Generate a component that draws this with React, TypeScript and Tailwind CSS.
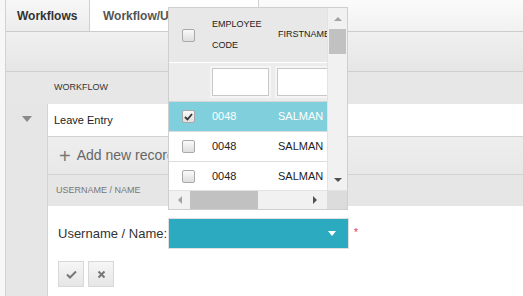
const rows = [
  { id: 1, code: "0048", name: "SALMAN", selected: true },
  { id: 2, code: "0048", name: "SALMAN", selected: false },
  { id: 3, code: "0048", name: "SALMAN", selected: false },
];

function Box({ checked }: { checked?: boolean }) {
  return (
    <div className="w-[13px] h-[13px] rounded-[2px] border border-[#a9a9a9] bg-gradient-to-b from-[#fafafa] to-[#dedede] flex items-center justify-center">
      {checked && (
        <svg width="9" height="8" viewBox="0 0 9 8">
          <path d="M1 4 L3.5 6.5 L8 1" stroke="#333" strokeWidth="1.8" fill="none" />
        </svg>
      )}
    </div>
  );
}

function EmployeePopup() {
  return (
    <div className="absolute left-[168px] top-[7px] w-[180px] h-[203px] border border-[#cfcfcf] bg-white flex flex-col">
      <div className="flex flex-1 min-h-0">
        <div className="flex-1 min-w-0 overflow-hidden">
          <div className="w-[200px]">
            {/* header */}
            <div className="h-[55px] bg-[#e8e8e8] flex items-center border-b border-[#fff] text-[9px] text-[#222]">
              <div className="w-[36px] flex justify-center pl-[2px]">
                <Box />
              </div>
              <div className="w-[66px] pl-[7px] leading-[21px]">
                EMPLOYEE
                <br />
                CODE
              </div>
              <div className="pl-[7px] whitespace-nowrap">FIRSTNAME</div>
            </div>
            {/* filter row */}
            <div className="h-[39px] bg-[#ececec] flex items-center border-b border-[#d6d6d6]">
              <div className="w-[36px]" />
              <div className="w-[66px] pl-[7px]">
                <div className="w-[57px] h-[28px] bg-white border border-[#c8c8c8] outline outline-2 outline-[#f5f5f5]" />
              </div>
              <div className="pl-[6px]">
                <div className="w-[60px] h-[28px] bg-white border border-[#c8c8c8] outline outline-2 outline-[#f5f5f5]" />
              </div>
            </div>
            {rows.map((r) => (
              <div
                key={r.id}
                className={`h-[30px] flex items-center text-[11px] border-b border-[#dcdcdc] ${
                  r.selected ? "bg-[#7fcfdc] text-white" : "bg-white text-[#222]"
                }`}
              >
                <div className="w-[36px] flex justify-center pl-[2px]">
                  <Box checked={r.selected} />
                </div>
                <div className="w-[66px] pl-[7px]">{r.code}</div>
                <div className="pl-[7px]">{r.name}</div>
              </div>
            ))}
          </div>
        </div>
        {/* vertical scrollbar */}
        <div className="w-[20px] bg-[#f1f1f1] border-l border-[#e3e3e3] flex flex-col items-center">
          <div className="h-[21px] flex items-center justify-center">
            <div className="w-0 h-0 border-l-[4px] border-r-[4px] border-b-[4px] border-l-transparent border-r-transparent border-b-[#a3a3a3]" />
          </div>
          <div className="w-[17px] h-[25px] bg-[#c1c1c1]" />
          <div className="flex-1" />
          <div className="h-[20px] flex items-center justify-center">
            <div className="w-0 h-0 border-l-[4px] border-r-[4px] border-t-[4px] border-l-transparent border-r-transparent border-t-[#505050]" />
          </div>
        </div>
      </div>
      {/* horizontal scrollbar */}
      <div className="h-[19px] flex bg-[#f1f1f1] border-t border-[#e3e3e3]">
        <div className="w-[21px] flex items-center justify-center">
          <div className="w-0 h-0 border-t-[4px] border-b-[4px] border-r-[4px] border-t-transparent border-b-transparent border-r-[#a3a3a3]" />
        </div>
        <div className="w-[68px] bg-[#c1c1c1]" />
        <div className="flex-1 flex items-center justify-end pr-[10px]">
          <div className="w-0 h-0 border-t-[4px] border-b-[4px] border-l-[4px] border-t-transparent border-b-transparent border-l-[#505050]" />
        </div>
        <div className="w-[20px] bg-[#dcdcdc]" />
      </div>
    </div>
  );
}

export default function App() {
  return (
    <div className="relative w-[523px] h-[296px] overflow-hidden bg-[#f7f7f7] pl-[5px] font-['Liberation_Sans',Arial,sans-serif]">
      <div className="h-full border-l border-[#d2d2d2] bg-white flex flex-col">
        {/* tabs */}
        <div className="h-[32px] flex bg-gradient-to-b from-[#fbfbfb] to-[#f1f1f1] border-b border-[#cccccc]">
          <div className="w-[84px] bg-gradient-to-b from-[#f7f7f7] to-[#ececec] border-r border-[#d0d0d0] flex items-center pl-[11px] text-[12px] font-bold text-[#333]">
            Workflows
          </div>
          <div className="w-[169px] bg-white border-r border-[#d0d0d0] flex items-center pl-[13px] text-[12px] font-bold text-[#555] whitespace-nowrap overflow-hidden">
            Workflow/User
          </div>
        </div>
        {/* grid toolbar */}
        <div className="h-[40px] bg-gradient-to-b from-[#f0f0f0] to-[#e6e6e6] border-b border-[#cfcfcf]" />
        {/* header */}
        <div className="h-[32px] bg-[#e7e7e7] flex items-center pl-[48px] text-[9px] text-[#333]">
          WORKFLOW
        </div>
        {/* master row */}
        <div className="flex flex-1 min-h-0">
          <div className="w-[42px] bg-[#e6e6e6] border-r border-[#d4d4d4] flex justify-center pt-[12px]">
            <div className="w-0 h-0 border-l-[5px] border-r-[5px] border-t-[6px] border-l-transparent border-r-transparent border-t-[#8a8a8a]" />
          </div>
          <div className="flex-1 flex flex-col">
            <div className="h-[32px] flex items-center pl-[6px] text-[11px] text-[#222] bg-white">
              Leave Entry
            </div>
            {/* detail grid */}
            <div className="h-[39px] bg-gradient-to-b from-[#eeeeee] to-[#e8e8e8] border-y border-[#d2d2d2] flex items-center pl-[11px] text-[14px] text-[#666]">
              <span className="text-[20px] leading-none font-light mr-[6px] text-[#777]">+</span>
              Add new record
            </div>
            <div className="h-[31px] bg-[#e6e6e6] flex items-center pl-[8px] text-[9px] text-[#777]">
              USERNAME / NAME
            </div>
            <div className="flex-1 bg-white pl-[10px] pt-[12px]">
              <div className="flex items-center">
                <span className="text-[13px] text-[#333] w-[110px] whitespace-nowrap">Username / Name:</span>
                <div className="w-[181px] h-[31px] bg-[#2caac0] border border-[#e0e0e0] flex items-center justify-end pr-[12px]">
                  <div className="w-0 h-0 border-l-[4px] border-r-[4px] border-t-[5px] border-l-transparent border-r-transparent border-t-white" />
                </div>
                <span className="ml-[5px] text-[10px] text-[#e8334a] -mt-[2px]">*</span>
              </div>
              <div className="flex gap-[4px] mt-[12px]">
                <div className="w-[26px] h-[26px] bg-gradient-to-b from-[#f6f6f6] to-[#e6e6e6] border border-[#d8d8d8] flex items-center justify-center">
                  <svg width="11" height="9" viewBox="0 0 11 9">
                    <path d="M1 4.5 L4 7.5 L10 1.5" stroke="#777" strokeWidth="2" fill="none" />
                  </svg>
                </div>
                <div className="w-[26px] h-[26px] bg-gradient-to-b from-[#f6f6f6] to-[#e6e6e6] border border-[#d8d8d8] flex items-center justify-center">
                  <svg width="9" height="9" viewBox="0 0 9 9">
                    <path d="M1.5 1.5 L7.5 7.5 M7.5 1.5 L1.5 7.5" stroke="#777" strokeWidth="2" fill="none" />
                  </svg>
                </div>
              </div>
            </div>
          </div>
        </div>
      </div>
      <EmployeePopup />
    </div>
  );
}
